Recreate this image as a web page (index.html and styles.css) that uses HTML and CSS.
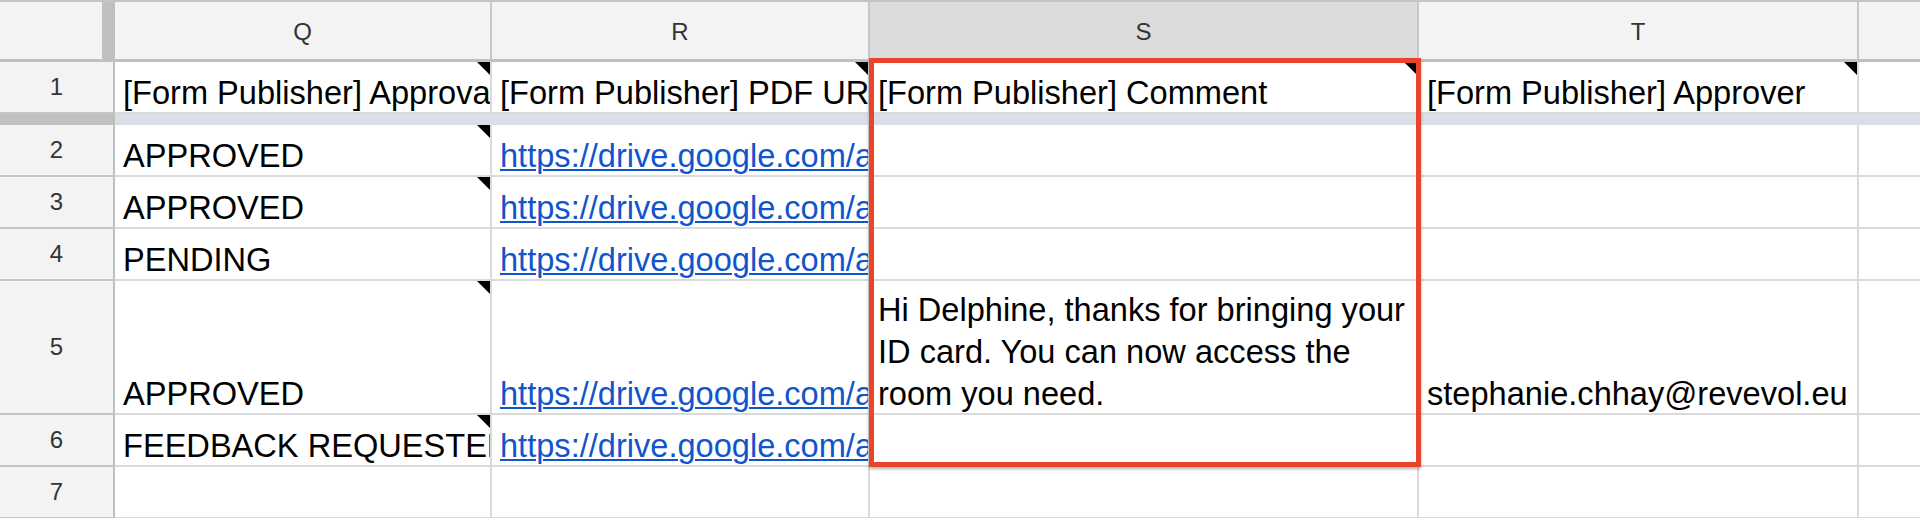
FILE: index.html
```html
<!DOCTYPE html>
<html>
<head>
<meta charset="utf-8">
<link rel="stylesheet" href="styles.css">
</head>
<body>
<div class="sheet">
  <div class="topline"></div>
  <div class="row head">
    <div class="hc corner"></div>
    <div class="hc cq">Q</div>
    <div class="hc cr">R</div>
    <div class="hc cs sel">S</div>
    <div class="hc ct">T</div>
    <div class="hc cu last"></div>
  </div>

  <div class="row">
    <div class="rh">1</div>
    <div class="cell cq note">[Form Publisher] Approval Status</div>
    <div class="cell cr note">[Form Publisher] PDF URL</div>
    <div class="cell cs note">[Form Publisher] Comment</div>
    <div class="cell ct note">[Form Publisher] Approver</div>
    <div class="cell cu last"></div>
  </div>
  <div class="freeze"><div class="fz-rh"></div><div class="fz-main"></div></div>

  <div class="row">
    <div class="rh">2</div>
    <div class="cell cq note">APPROVED</div>
    <div class="cell cr"><a class="link">https://drive.google.com/a/revevol.eu/file/d/1Xk2/view</a></div>
    <div class="cell cs"></div>
    <div class="cell ct"></div>
    <div class="cell cu last"></div>
  </div>

  <div class="row">
    <div class="rh">3</div>
    <div class="cell cq note">APPROVED</div>
    <div class="cell cr"><a class="link">https://drive.google.com/a/revevol.eu/file/d/1Pq7/view</a></div>
    <div class="cell cs"></div>
    <div class="cell ct"></div>
    <div class="cell cu last"></div>
  </div>

  <div class="row">
    <div class="rh">4</div>
    <div class="cell cq">PENDING</div>
    <div class="cell cr"><a class="link">https://drive.google.com/a/revevol.eu/file/d/1Zr4/view</a></div>
    <div class="cell cs"></div>
    <div class="cell ct"></div>
    <div class="cell cu last"></div>
  </div>

  <div class="row tall">
    <div class="rh">5</div>
    <div class="cell cq note">APPROVED</div>
    <div class="cell cr"><a class="link">https://drive.google.com/a/revevol.eu/file/d/1Hd9/view</a></div>
    <div class="cell cs wrap"><span class="wrap-text">Hi Delphine, thanks for bringing your ID card. You can now access the room you need.</span></div>
    <div class="cell ct">stephanie.chhay@revevol.eu</div>
    <div class="cell cu last"></div>
  </div>

  <div class="row">
    <div class="rh">6</div>
    <div class="cell cq note">FEEDBACK REQUESTED</div>
    <div class="cell cr"><a class="link">https://drive.google.com/a/revevol.eu/file/d/1Fb3/view</a></div>
    <div class="cell cs"></div>
    <div class="cell ct"></div>
    <div class="cell cu last"></div>
  </div>

  <div class="row">
    <div class="rh">7</div>
    <div class="cell cq"></div>
    <div class="cell cr"></div>
    <div class="cell cs"></div>
    <div class="cell ct"></div>
    <div class="cell cu last"></div>
  </div>

  <div class="selection"></div>
</div>
</body>
</html>
```

FILE: styles.css
```css
html, body {
  margin: 0;
  padding: 0;
  background: #ffffff;
}
body {
  font-family: "Liberation Sans", Arial, sans-serif;
  overflow: hidden;
}
.sheet {
  position: relative;
  width: 1920px;
  height: 518px;
  overflow: hidden;
}
.topline {
  height: 2px;
  background: #c4c4c4;
}
.row {
  display: flex;
  height: 52px;
}
.row.tall {
  height: 134px;
}
.row.head {
  height: 60px;
}

/* column widths */
.corner { width: 115px; }
.rh { width: 115px; }
.cq { width: 377px; }
.cr { width: 378px; }
.cs { width: 549px; }
.ct { width: 440px; }
.cu { flex: 1 1 auto; }

/* column header cells */
.hc {
  box-sizing: border-box;
  flex: none;
  height: 60px;
  background: #f3f3f3;
  border-right: 2px solid #c8c8c8;
  border-bottom: 3px solid #c0c0c0;
  display: flex;
  align-items: center;
  justify-content: center;
  font-size: 24px;
  color: #333333;
  padding-top: 2px;
}
.hc.corner {
  border-right: 13px solid #c0c0c0;
}
.hc.sel {
  background: #dcdcdc;
}
.hc.cu {
  flex: 1 1 auto;
}
.hc.last, .cell.last {
  border-right: none;
}

/* row header cells */
.rh {
  box-sizing: border-box;
  flex: none;
  height: 100%;
  background: #f3f3f3;
  border-right: 2px solid #c0c0c0;
  border-bottom: 2px solid #c4c4c4;
  display: flex;
  align-items: center;
  justify-content: center;
  font-size: 24px;
  color: #333333;
}

/* data cells */
.cell {
  box-sizing: border-box;
  flex: none;
  position: relative;
  height: 100%;
  border-right: 2px solid #dadada;
  border-bottom: 2px solid #dadada;
  padding: 0 8px 0 8px;
  display: flex;
  align-items: flex-end;
  font-size: 32.6px;
  line-height: 38px;
  color: #000000;
  white-space: nowrap;
  overflow: hidden;
}
.cell.cu {
  flex: 1 1 auto;
}
.cell.wrap {
  white-space: normal;
  line-height: 42px;
}
.wrap-text {
  margin-bottom: -2px;
}
.link {
  color: #1155cc;
  text-decoration: underline;
  text-decoration-thickness: 2px;
  text-underline-offset: 2px;
}
.note::after {
  content: "";
  position: absolute;
  top: 0;
  right: 0;
  width: 0;
  height: 0;
  border-style: solid;
  border-width: 0 13px 13px 0;
  border-color: transparent #000000 transparent transparent;
}

/* frozen-row divider */
.freeze {
  display: flex;
  height: 11px;
}
.fz-rh {
  width: 115px;
  background: #c0c0c0;
}
.fz-main {
  flex: 1 1 auto;
  background: #dadfe7;
}

/* highlighted range outline */
.selection {
  position: absolute;
  left: 869px;
  top: 58px;
  width: 552px;
  height: 409px;
  box-sizing: border-box;
  border: 5px solid #e8452c;
  box-shadow: 0 2px 3px rgba(0, 0, 0, 0.3);
  pointer-events: none;
}
```
